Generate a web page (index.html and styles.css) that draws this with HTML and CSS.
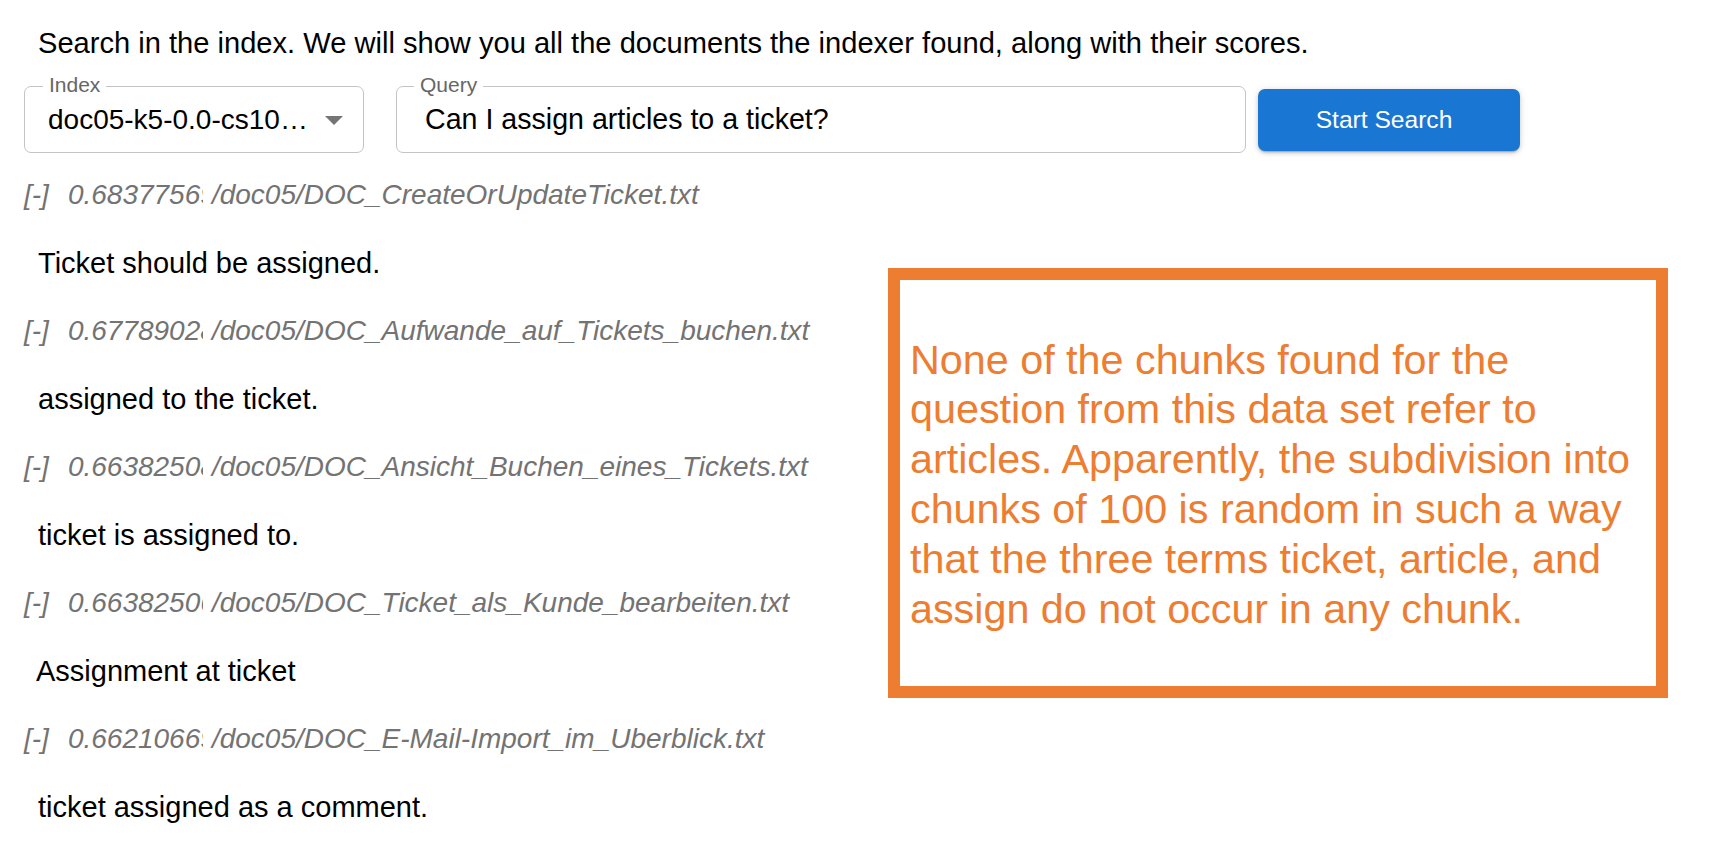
FILE: index.html
```html
<!DOCTYPE html>
<html lang="en">
<head>
  <meta charset="UTF-8">
  <meta name="viewport" content="width=device-width, initial-scale=1.0">
  <title>Index search</title>
  <link rel="stylesheet" href="styles.css">
</head>
<body>
  <div class="page">
    <p class="intro">Search in the index. We will show you all the documents the indexer found, along with their scores.</p>

    <div class="search-row">
      <div class="field field-index">
        <span class="field-label">Index</span>
        <span class="field-value">doc05-k5-0.0-cs10&hellip;</span>
        <svg class="drop-arrow" width="18" height="9" viewBox="0 0 18 9"><path d="M0 0 L18 0 L9 9 Z" fill="#757575"/></svg>
      </div>
      <div class="field field-query">
        <span class="field-label">Query</span>
        <span class="field-value">Can I assign articles to a ticket?</span>
      </div>
      <button class="search-btn">Start Search</button>
    </div>

    <div class="results">
      <div class="result">
        <div class="result-head"><span class="toggle">[-]</span><span class="score">0.68377569</span><span class="path">/doc05/DOC_CreateOrUpdateTicket.txt</span></div>
        <p class="chunk">Ticket should be assigned.</p>
      </div>
      <div class="result">
        <div class="result-head"><span class="toggle">[-]</span><span class="score">0.67789028</span><span class="path">/doc05/DOC_Aufwande_auf_Tickets_buchen.txt</span></div>
        <p class="chunk">assigned to the ticket.</p>
      </div>
      <div class="result">
        <div class="result-head"><span class="toggle">[-]</span><span class="score">0.66382508</span><span class="path">/doc05/DOC_Ansicht_Buchen_eines_Tickets.txt</span></div>
        <p class="chunk">ticket is assigned to.</p>
      </div>
      <div class="result">
        <div class="result-head"><span class="toggle">[-]</span><span class="score">0.66382506</span><span class="path">/doc05/DOC_Ticket_als_Kunde_bearbeiten.txt</span></div>
        <p class="chunk chunk-tight">Assignment at ticket</p>
      </div>
      <div class="result">
        <div class="result-head"><span class="toggle">[-]</span><span class="score">0.66210669</span><span class="path">/doc05/DOC_E-Mail-Import_im_Uberblick.txt</span></div>
        <p class="chunk">ticket assigned as a comment.</p>
      </div>
    </div>
  </div>

  <div class="note">
    <p>None of the chunks found for the<br>
    question from this data set refer to<br>
    articles. Apparently, the subdivision into<br>
    chunks of 100 is random in such a way<br>
    that the three terms ticket, article, and<br>
    assign do not occur in any chunk.</p>
  </div>
</body>
</html>
```

FILE: styles.css
```css
body {
  margin: 0;
  font-family: "Liberation Sans", Arial, sans-serif;
  background-color: #fff;
  color: #000;
}
.page {
  padding: 0 24px;
}
.intro {
  margin: 0;
  padding: 27px 0 0 14px;
  font-size: 29.1px;
  line-height: 33px;
}
.search-row {
  display: flex;
  align-items: center;
  margin-top: 26px;
}
.field {
  position: relative;
  display: flex;
  align-items: center;
  box-sizing: border-box;
  height: 67px;
  border: 1.5px solid #c4c4c4;
  border-radius: 7px;
}
.field-index {
  width: 340px;
  padding: 0 20px 0 23px;
  justify-content: space-between;
}
.field-query {
  width: 850px;
  margin-left: 32px;
  padding: 0 28px;
}
.field-label {
  position: absolute;
  top: -14px;
  left: 18px;
  padding: 0 6px;
  background: #fff;
  color: #666;
  font-size: 21px;
  line-height: 24px;
}
.field-query .field-label {
  left: 17px;
}
.field-value {
  font-size: 28px;
  line-height: 33px;
  white-space: nowrap;
}
.field-query .field-value {
  font-size: 28.6px;
}
.drop-arrow {
  margin-top: 2px;
}
.search-btn {
  width: 262px;
  height: 62px;
  margin-left: 12px;
  padding: 0 10px 0 0;
  border: none;
  border-radius: 7px;
  background-color: #1976d2;
  color: #fff;
  font-family: inherit;
  font-size: 24.6px;
  box-shadow: 0 3px 2px -2px rgba(0,0,0,0.25), 0 2px 4px rgba(0,0,0,0.15), 0 1px 8px rgba(0,0,0,0.1);
}
.results {
  margin-top: 25px;
}
.result-head {
  font-style: italic;
  color: #737373;
  font-size: 28px;
  line-height: 33px;
  white-space: nowrap;
}
.toggle {
  margin-right: 19px;
}
.score {
  display: inline-block;
  width: 135px;
  overflow: hidden;
  vertical-align: top;
  margin-right: 9px;
}
.chunk {
  margin: 36px 0 34px;
  padding-left: 14px;
  font-size: 29px;
  line-height: 33px;
}
.chunk-tight {
  padding-left: 12px;
}
.note {
  position: absolute;
  left: 888px;
  top: 268px;
  width: 780px;
  height: 430px;
  box-sizing: border-box;
  border: 12px solid #ed7d31;
  background: #fff;
  display: flex;
  align-items: center;
  padding: 4px 10px 0;
}
.note p {
  margin: 0;
  color: #ed7d31;
  font-size: 41.3px;
  line-height: 49.8px;
  white-space: nowrap;
}
```
